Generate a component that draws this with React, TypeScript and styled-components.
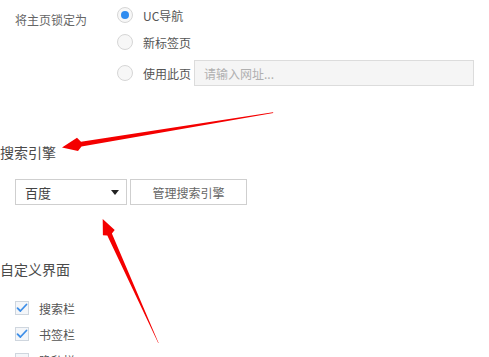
import React from "react";
import styled, { createGlobalStyle } from "styled-components";

const Global = createGlobalStyle`
  html, body { margin: 0; padding: 0; background: #fff; }
  body { font-family: "Noto Sans CJK SC", "Noto Sans", sans-serif; }
`;

const Page = styled.div`
  position: relative;
  width: 489px;
  height: 357px;
  overflow: hidden;
  padding-top: 2px;
  box-sizing: border-box;
  color: #555;
  font-size: 12px;
`;

const LockRow = styled.div`
  display: flex;
  padding-left: 15px;
`;

const FieldLabel = styled.div`
  width: 102px;
  padding-top: 5px;
  line-height: 26px;
  color: #666;
  font-size: 12px;
`;

const RadioList = styled.div`
  display: flex;
  flex-direction: column;
  gap: 1px;
`;

const OptionRow = styled.label<{ $spaced?: boolean }>`
  display: flex;
  align-items: center;
  height: 26px;
  margin-top: ${(p) => (p.$spaced ? "4px" : "0")};
  color: #555;
  font-size: 12px;
`;

const Radio = styled.span<{ $on?: boolean }>`
  width: 14px;
  height: 14px;
  border-radius: 50%;
  border: 1px solid #d6d6d6;
  background: #f7f7f7;
  display: flex;
  align-items: center;
  justify-content: center;
  margin-right: 10px;
  &::after {
    content: "";
    width: 8px;
    height: 8px;
    border-radius: 50%;
    background: ${(p) => (p.$on ? "#2f8cf0" : "transparent")};
  }
`;

const UrlInput = styled.input`
  margin-left: 3px;
  width: 280px;
  height: 26px;
  box-sizing: border-box;
  border: 1px solid #dcdcdc;
  background: #f5f5f5;
  padding: 0 9px;
  font-family: inherit;
  font-size: 12px;
  color: #555;
  outline: none;
  &::placeholder { color: #b0b0b0; }
`;

const Heading = styled.div<{ $top: number }>`
  margin-top: ${(p) => p.$top}px;
  line-height: 20px;
  font-size: 14px;
  color: #4a4a4a;
`;

const EngineRow = styled.div`
  display: flex;
  gap: 3px;
  margin-top: 17px;
  padding-left: 15px;
`;

const Select = styled.div`
  width: 112px;
  height: 26px;
  box-sizing: border-box;
  border: 1px solid #cfcfcf;
  display: flex;
  align-items: center;
  justify-content: space-between;
  padding: 0 7px 0 9px;
  font-size: 13px;
  color: #444;
  &::after {
    content: "";
    border-left: 4px solid transparent;
    border-right: 4px solid transparent;
    border-top: 5px solid #222;
  }
`;

const Button = styled.div`
  width: 117px;
  height: 26px;
  box-sizing: border-box;
  border: 1px solid #cfcfcf;
  display: flex;
  align-items: center;
  justify-content: center;
  font-size: 12px;
  color: #666;
`;

const CheckList = styled.div`
  margin-top: 16px;
  padding-left: 15px;
  display: flex;
  flex-direction: column;
`;

const CheckRow = styled.div`
  display: flex;
  align-items: center;
  height: 26px;
  font-size: 12px;
  color: #555;
`;

const Box = styled.span`
  width: 14px;
  height: 14px;
  box-sizing: border-box;
  border: 1px solid #cfd6de;
  background: #f4f6f9;
  margin-right: 10px;
  display: flex;
  align-items: center;
  justify-content: center;
`;

const Overlay = styled.svg`
  position: absolute;
  left: 0;
  top: 0;
  pointer-events: none;
`;

const Check = () => (
  <svg width="12" height="10" viewBox="0 0 12 10">
    <path d="M1.5 5.2 L4.4 8 L10.5 1.5" fill="none" stroke="#3d8ee8" strokeWidth="1.8" strokeLinecap="round" strokeLinejoin="round" />
  </svg>
);

export default function App() {
  return (
    <>
      <Global />
      <Page>
        <LockRow>
          <FieldLabel>将主页锁定为</FieldLabel>
          <RadioList>
            <OptionRow><Radio $on />UC导航</OptionRow>
            <OptionRow><Radio />新标签页</OptionRow>
            <OptionRow $spaced><Radio />使用此页<UrlInput placeholder="请输入网址..." /></OptionRow>
          </RadioList>
        </LockRow>
        <Heading $top={56}>搜索引擎</Heading>
        <EngineRow>
          <Select>百度</Select>
          <Button>管理搜索引擎</Button>
        </EngineRow>
        <Heading $top={54}>自定义界面</Heading>
        <CheckList>
          <CheckRow><Box><Check /></Box>搜索栏</CheckRow>
          <CheckRow><Box><Check /></Box>书签栏</CheckRow>
          <CheckRow><Box />隐私栏</CheckRow>
        </CheckList>
        <Overlay width="489" height="357" viewBox="0 0 489 357">
          <polygon points="273,112.3 273.3,113 81.5,146.6 78,151 62,147.5 77,137.8 81,141.8" fill="#f40000" />
          <polygon points="102.7,219 114.7,230 111.9,233.5 158.6,343 158.2,343 107.3,235.5 102.9,235.3" fill="#f40000" />
        </Overlay>
      </Page>
    </>
  );
}
